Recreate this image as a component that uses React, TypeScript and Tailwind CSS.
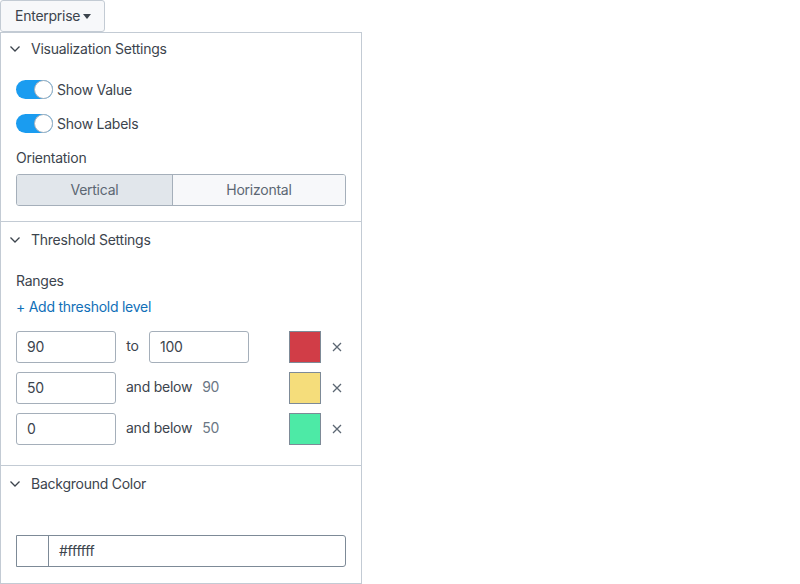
import React, { useState } from 'react';

interface Range {
  id: number;
  from: string;
  to?: string;
  below?: string;
  color: string;
}

const ranges: Range[] = [
  { id: 1, from: '90', to: '100', color: '#d13d47' },
  { id: 2, from: '50', below: '90', color: '#f5dd7b' },
  { id: 3, from: '0', below: '50', color: '#4deaa6' },
];

const Chevron = () => (
  <svg width="12" height="8" viewBox="0 0 12 8" className="shrink-0">
    <polyline points="1.5,1.5 6,6 10.5,1.5" fill="none" stroke="#3c444d" strokeWidth="1.3" />
  </svg>
);

const Toggle = ({ label }: { label: string }) => {
  const [on, setOn] = useState(true);
  return (
    <div className="flex items-center h-[34px]">
      <button
        onClick={() => setOn(!on)}
        className={`relative w-[37px] h-[19px] rounded-full ${on ? 'bg-[#1a9cf0]' : 'bg-[#c3cbd4]'}`}
      >
        <span
          className={`absolute top-0 w-[19px] h-[19px] rounded-full bg-white border border-[#a9b2bc] ${on ? 'right-0' : 'left-0'}`}
        />
      </button>
      <span className="ml-[4px] mt-[2px] text-[#3c444d]">{label}</span>
    </div>
  );
};

const SectionHeader = ({ title, h }: { title: string; h: string }) => (
  <div className={`flex items-center pl-[8px] ${h}`}>
    <Chevron />
    <span className="ml-[10px] text-[#3c444d]">{title}</span>
  </div>
);

const App: React.FC = () => {
  const [orientation, setOrientation] = useState('vertical');

  return (
    <div
      className="w-[800px] h-[584px] bg-white text-[14px] leading-5 tracking-[-0.25px]"
      style={{ fontFamily: 'Inter, "Noto Sans", sans-serif' }}
    >
      <button className="flex items-center h-8 w-[105px] pl-[14px] border border-[#c3cbd4] rounded-[3px] bg-[#f7f8fa] text-[#3c444d]">
        Enterprise
        <svg width="8" height="5" viewBox="0 0 8 5" className="ml-[3px]">
          <polygon points="0,0 8,0 4,5" fill="#3c444d" />
        </svg>
      </button>

      <div className="w-[362px] border border-[#c3cbd4]">
        {/* Visualization settings */}
        <div className="border-b border-[#c3cbd4]">
          <SectionHeader title="Visualization Settings" h="h-[32px]" />
          <div className="pl-[15px] pr-[15px] pt-[7px] pb-[15px]">
            <Toggle label="Show Value" />
            <Toggle label="Show Labels" />
            <div className="mt-[8px] text-[#3c444d]">Orientation</div>
            <div className="mt-[6px] flex h-8 border border-[#a5afba] rounded-[3px] overflow-hidden">
              <button
                onClick={() => setOrientation('vertical')}
                className={`flex-auto text-[#5c6773] ${orientation === 'vertical' ? 'bg-[#e1e6eb]' : 'bg-[#f7f8fa]'}`}
              >
                Vertical
              </button>
              <button
                onClick={() => setOrientation('horizontal')}
                className={`flex-auto border-l border-[#a5afba] text-[#5c6773] ${orientation === 'horizontal' ? 'bg-[#e1e6eb]' : 'bg-[#f7f8fa]'}`}
              >
                Horizontal
              </button>
            </div>
          </div>
        </div>

        {/* Threshold settings */}
        <div className="border-b border-[#c3cbd4]">
          <SectionHeader title="Threshold Settings" h="h-[36px]" />
          <div className="pl-[15px] pr-[15px] pt-[13px] pb-[20px]">
            <div className="text-[#3c444d]">Ranges</div>
            <div className="mt-[6px] text-[#1170b8]">+ Add threshold level</div>
            <div className="mt-[14px] flex flex-col gap-[9px]">
              {ranges.map((r) => (
                <div key={r.id} className="flex items-center h-8">
                  <div className="w-[100px] h-8 border border-[#a5afba] rounded-[3px] pl-[10px] flex items-center text-[#3c444d]">
                    {r.from}
                  </div>
                  <div className="w-[173px] flex items-center">
                    {r.to !== undefined ? (
                      <>
                        <span className="w-[33px] text-center text-[#3c444d] -mt-[3px]">to</span>
                        <div className="w-[100px] h-8 border border-[#a5afba] rounded-[3px] pl-[10px] flex items-center text-[#3c444d]">
                          {r.to}
                        </div>
                      </>
                    ) : (
                      <>
                        <span className="ml-[10px] text-[#3c444d] -mt-[3px]">and below</span>
                        <span className="ml-[10px] text-[#6b7785] -mt-[3px]">{r.below}</span>
                      </>
                    )}
                  </div>
                  <div className="w-8 h-8 border border-[#7d8a97]" style={{ backgroundColor: r.color }} />
                  <svg width="10" height="10" viewBox="0 0 10 10" className="ml-[11px]">
                    <path d="M1 1 L9 9 M9 1 L1 9" stroke="#5c6773" strokeWidth="1.3" />
                  </svg>
                </div>
              ))}
            </div>
          </div>
        </div>

        {/* Background color */}
        <div>
          <SectionHeader title="Background Color" h="h-[36px]" />
          <div className="pl-[15px] pr-[15px] pt-[33px] pb-[16px]">
            <div className="flex h-8 border border-[#7d8a97] rounded-r-[3px]">
              <div className="w-8 border-r border-[#7d8a97] bg-white" />
              <div className="flex items-center pl-[10px] text-[#3c444d]">#ffffff</div>
            </div>
          </div>
        </div>
      </div>
    </div>
  );
};

export default App;
